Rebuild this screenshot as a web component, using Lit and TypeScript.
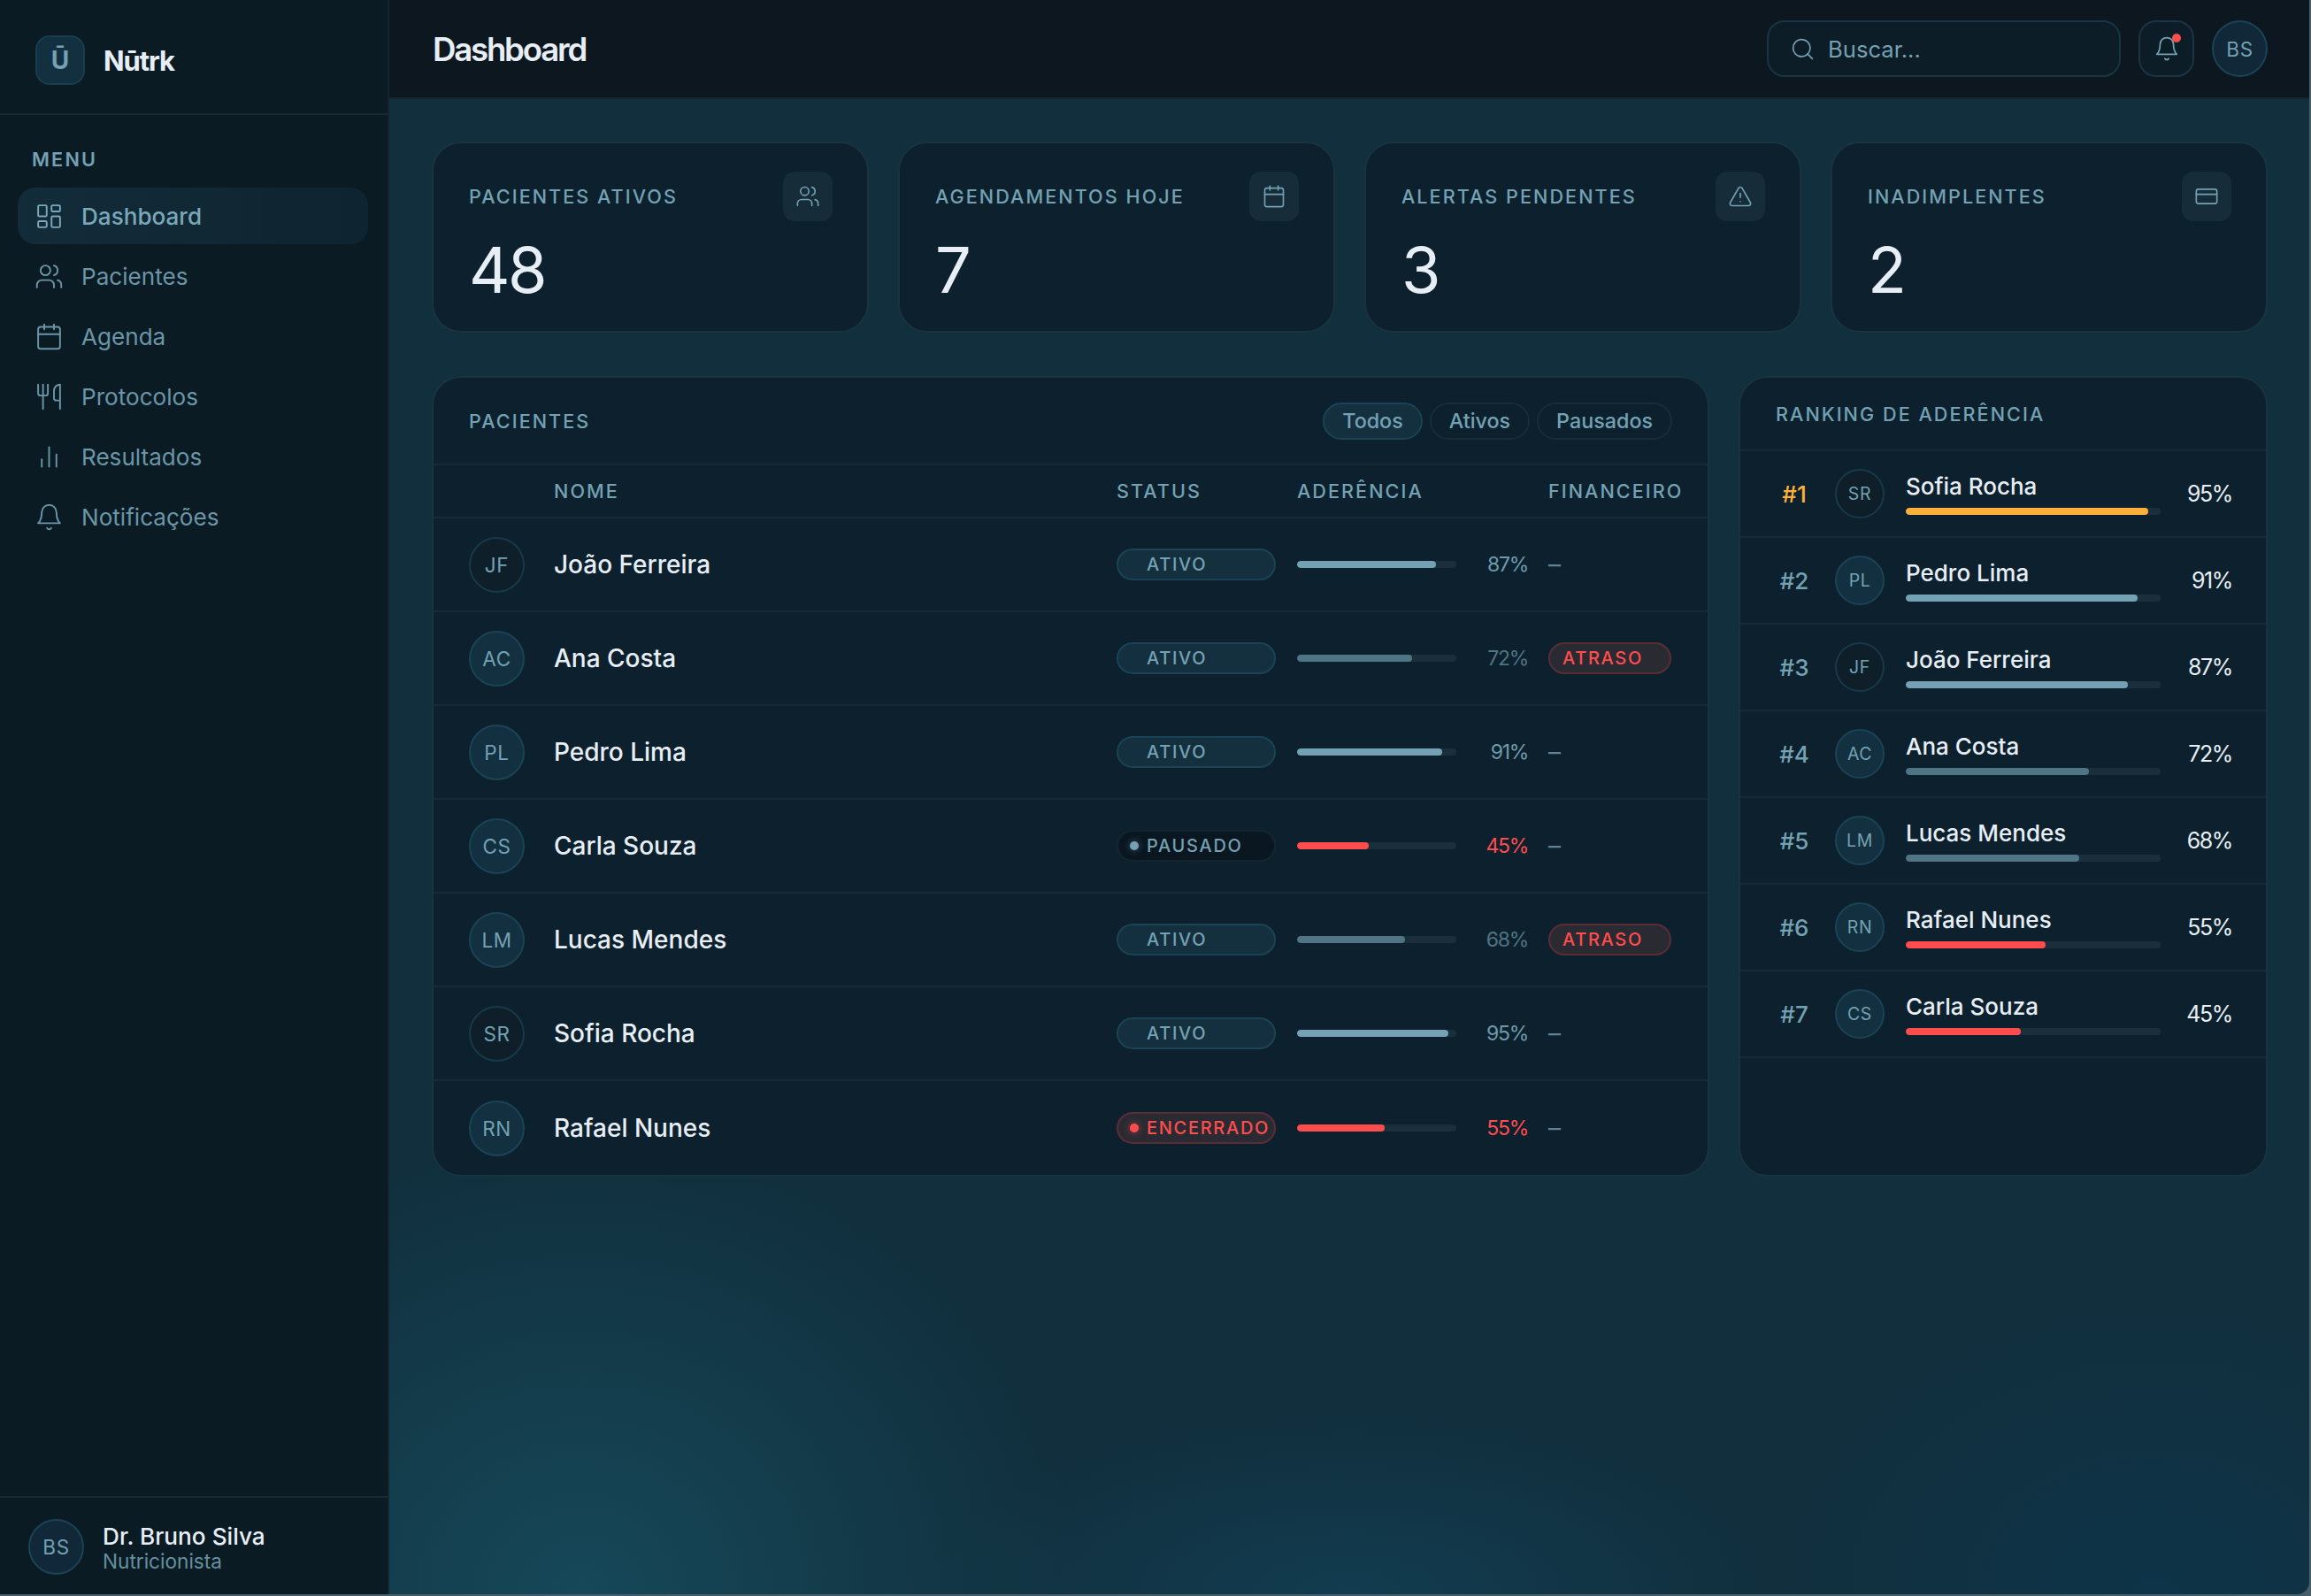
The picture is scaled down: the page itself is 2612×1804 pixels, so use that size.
import { LitElement, html, css, svg } from 'lit';
import { customElement } from 'lit/decorators.js';

const icons: Record<string, unknown> = {
  dashboard: svg`<rect x="3" y="3" width="7" height="9" rx="1"/><rect x="14" y="3" width="7" height="5" rx="1"/><rect x="14" y="12" width="7" height="9" rx="1"/><rect x="3" y="16" width="7" height="5" rx="1"/>`,
  users: svg`<path d="M16 21v-2a4 4 0 0 0-4-4H6a4 4 0 0 0-4 4v2"/><circle cx="9" cy="7" r="4"/><path d="M22 21v-2a4 4 0 0 0-3-3.87"/><path d="M16 3.13a4 4 0 0 1 0 7.75"/>`,
  calendar: svg`<rect x="3" y="4" width="18" height="18" rx="2"/><path d="M16 2v4"/><path d="M8 2v4"/><path d="M3 10h18"/>`,
  utensils: svg`<path d="M3 2v7c0 1.1.9 2 2 2h4a2 2 0 0 0 2-2V2"/><path d="M7 2v20"/><path d="M21 15V2a5 5 0 0 0-5 5v6c0 1.1.9 2 2 2h3Zm0 0v7"/>`,
  chart: svg`<path d="M18 20V10"/><path d="M12 20V4"/><path d="M6 20v-6"/>`,
  bell: svg`<path d="M6 8a6 6 0 0 1 12 0c0 7 3 9 3 9H3s3-2 3-9"/><path d="M10.3 21a1.94 1.94 0 0 0 3.4 0"/>`,
  search: svg`<circle cx="11" cy="11" r="8"/><path d="m21 21-4.3-4.3"/>`,
  alert: svg`<path d="m21.73 18-8-14a2 2 0 0 0-3.48 0l-8 14A2 2 0 0 0 4 21h16a2 2 0 0 0 1.73-3Z"/><path d="M12 9v4"/><path d="M12 17h.01"/>`,
  card: svg`<rect x="2" y="5" width="20" height="14" rx="2"/><path d="M2 10h20"/>`,
};

const icon = (name: string, size: number) => html`<svg
  width=${size}
  height=${size}
  viewBox="0 0 24 24"
  fill="none"
  stroke="currentColor"
  stroke-width="1.4"
  stroke-linecap="round"
  stroke-linejoin="round"
>${icons[name]}</svg>`;

const nav = [
  ['dashboard', 'Dashboard'],
  ['users', 'Pacientes'],
  ['calendar', 'Agenda'],
  ['utensils', 'Protocolos'],
  ['chart', 'Resultados'],
  ['bell', 'Notificações'],
];

const stats = [
  ['Pacientes ativos', '48', 'users'],
  ['Agendamentos hoje', '7', 'calendar'],
  ['Alertas pendentes', '3', 'alert'],
  ['Inadimplentes', '2', 'card'],
];

const patients = [
  { ini: 'JF', name: 'João Ferreira', status: 'ativo', pct: 87, late: false },
  { ini: 'AC', name: 'Ana Costa', status: 'ativo', pct: 72, late: true },
  { ini: 'PL', name: 'Pedro Lima', status: 'ativo', pct: 91, late: false },
  { ini: 'CS', name: 'Carla Souza', status: 'pausado', pct: 45, late: false },
  { ini: 'LM', name: 'Lucas Mendes', status: 'ativo', pct: 68, late: true },
  { ini: 'SR', name: 'Sofia Rocha', status: 'ativo', pct: 95, late: false },
  { ini: 'RN', name: 'Rafael Nunes', status: 'encerrado', pct: 55, late: false },
];

const ranking = [...patients].sort((a, b) => b.pct - a.pct);

const tone = (pct: number) => (pct < 60 ? 'low' : pct < 80 ? 'mid' : 'high');
const avatarTone = (ini: string) => (ini === 'JF' || ini === 'SR' ? 'dim' : '');

@customElement('app-root')
export class AppRoot extends LitElement {
  static styles = css`
    :host {
      display: block;
      height: 1804px;
      background: #465f6b;
      font-family: Inter, 'Noto Sans', sans-serif;
      color: #e8eef5;
      --muted: #74a1b3;
      --line: #152a36;
      --edge: #1a3340;
      --card: #0c212d;
    }

    * {
      box-sizing: border-box;
    }

    /* the capture has a thin light edge on the right and bottom, with a rounded corner */
    .shell {
      display: grid;
      grid-template-columns: 440px 1fr;
      width: 2610px;
      height: 1802px;
      border-bottom-right-radius: 14px;
      overflow: hidden;
    }

    /* sidebar */
    .sidebar {
      display: flex;
      flex-direction: column;
      background: #0a1b24;
      border-right: 2px solid #14252f;
    }

    .brand {
      display: flex;
      align-items: center;
      gap: 21px;
      height: 130px;
      padding: 8px 0 0 40px;
      border-bottom: 2px solid var(--line);
    }

    .logo {
      display: flex;
      align-items: center;
      justify-content: center;
      width: 56px;
      height: 56px;
      border-radius: 16px;
      background: #12303f;
      border: 2px solid #173d4f;
      color: #74a1b3;
      font-size: 28px;
      font-weight: 700;
    }

    .brand-name {
      font-size: 31px;
      font-weight: 700;
      letter-spacing: -1.1px;
    }

    .menu-label {
      margin: 35px 0 0 36px;
      font-size: 21.6px;
      font-weight: 600;
      letter-spacing: 2.2px;
      color: var(--muted);
      line-height: 30px;
    }

    .nav {
      display: flex;
      flex-direction: column;
      gap: 4px;
      margin: 17px 22px 0 20px;
    }

    .nav-item {
      display: flex;
      align-items: center;
      gap: 20px;
      height: 64px;
      padding-left: 19px;
      border-radius: 20px;
      font-size: 26.1px;
      color: #6a96a8;
    }

    .nav-item.active {
      background: linear-gradient(90deg, #132c39, #0e2430);
      color: #7aa8ba;
      font-weight: 500;
    }

    .user {
      display: flex;
      align-items: center;
      gap: 21px;
      margin-top: auto;
      height: 111px;
      padding: 2px 0 0 32px;
      border-top: 2px solid var(--line);
    }

    .user .avatar {
      background: #102838;
    }

    .user-text {
      padding-top: 4px;
    }

    .user-name {
      font-size: 26.2px;
      font-weight: 500;
      line-height: 28.5px;
    }

    .user-role {
      font-size: 22.6px;
      color: #64909f;
      line-height: 27px;
    }

    /* avatars */
    .avatar {
      flex: none;
      display: flex;
      align-items: center;
      justify-content: center;
      width: 63px;
      height: 63px;
      border-radius: 50%;
      background: #12303f;
      border: 2px solid #1a4355;
      color: #74a1b3;
      font-size: 22.5px;
      letter-spacing: 0.6px;
    }

    .avatar.dim {
      background: #0e1f2a;
      border-color: #17394a;
    }

    .avatar.small {
      width: 56px;
      height: 56px;
      font-size: 19.5px;
    }

    /* topbar */
    .content {
      display: flex;
      flex-direction: column;
      min-width: 0;
      background:
        radial-gradient(560px 520px at 10% 100%, #164859 0%, rgba(22, 72, 89, 0) 100%),
        radial-gradient(480px 200px at 50% 100%, #123c50 0%, rgba(18, 60, 80, 0) 100%),
        radial-gradient(420px 320px at 92% 100%, #0e3449 0%, rgba(14, 52, 73, 0) 100%),
        #112f3d;
    }

    .topbar {
      flex: none;
      display: flex;
      align-items: center;
      height: 112px;
      padding: 0 47px 0 49px;
      background: #0c1720;
      border-bottom: 2px solid #14252f;
    }

    .title {
      margin: 2px 0 0;
      font-size: 36.6px;
      font-weight: 600;
      letter-spacing: -2.2px;
    }

    .search {
      display: flex;
      align-items: center;
      gap: 14px;
      width: 400px;
      height: 64px;
      margin-left: auto;
      padding-left: 24px;
      border-radius: 20px;
      border: 2px solid #193544;
      background: #0c1d27;
      color: var(--muted);
      font-size: 25.6px;
    }

    .bell {
      position: relative;
      display: flex;
      align-items: center;
      justify-content: center;
      width: 63px;
      height: 64px;
      margin-left: 20px;
      border-radius: 20px;
      border: 2px solid #193544;
      background: #0c1d27;
      color: var(--muted);
    }

    .bell::after {
      content: '';
      position: absolute;
      top: 13px;
      right: 13px;
      width: 10px;
      height: 10px;
      border-radius: 50%;
      background: #ff4d4d;
    }

    .topbar .avatar {
      width: 63px;
      height: 64px;
      margin-left: 20px;
      background: #102838;
    }

    /* main */
    .main {
      display: flex;
      flex-direction: column;
      gap: 49px;
      padding: 48px 47px 0 48px;
    }

    .stats {
      display: grid;
      grid-template-columns: repeat(4, 1fr);
      gap: 33px;
    }

    .stat {
      height: 216px;
      padding: 32px 39px 32px 40px;
      border-radius: 33px;
      background: var(--card);
      border: 2px solid var(--edge);
    }

    .stat-top {
      display: flex;
      align-items: center;
      justify-content: space-between;
    }

    .label {
      font-size: 21.6px;
      font-weight: 500;
      letter-spacing: 2.05px;
      color: var(--muted);
      text-transform: uppercase;
    }

    .stat-icon {
      display: flex;
      align-items: center;
      justify-content: center;
      width: 56px;
      height: 56px;
      border-radius: 13px;
      background: #162c38;
      color: var(--muted);
    }

    .stat-value {
      margin-top: 19px;
      font-size: 72px;
      line-height: 1;
      font-weight: 400;
      letter-spacing: -2.5px;
    }

    .panels {
      display: grid;
      grid-template-columns: 1fr 598px;
      gap: 33px;
    }

    .panel {
      border-radius: 33px;
      background: var(--card);
      border: 2px solid var(--edge);
      overflow: hidden;
    }

    .panel-head {
      display: flex;
      align-items: center;
      justify-content: space-between;
      height: 99px;
      padding: 0 40px;
      border-bottom: 2px solid var(--line);
    }

    .filters {
      display: flex;
      gap: 8px;
    }

    .filter {
      height: 42px;
      padding: 0 20px;
      display: flex;
      align-items: center;
      border-radius: 21px;
      border: 2px solid #172d3a;
      color: var(--muted);
      font-size: 23.3px;
      font-weight: 500;
    }

    .filter.on {
      background: #14303f;
      border-color: #1a4355;
    }

    .row {
      display: grid;
      grid-template-columns: 96px 636px 204px 284px 1fr;
      align-items: center;
      padding-left: 40px;
      height: 106px;
      border-bottom: 2px solid var(--line);
    }

    .row:last-child {
      border-bottom: none;
    }

    .row.head {
      height: 60px;
    }

    .name {
      font-size: 28px;
      font-weight: 500;
    }

    .pill {
      display: flex;
      align-items: center;
      gap: 9px;
      height: 36px;
      padding-left: 13px;
      border-radius: 18px;
      border: 2px solid #1a4355;
      background: #14303e;
      color: #74a1b3;
      font-size: 20px;
      font-weight: 500;
      letter-spacing: 1.7px;
      text-transform: uppercase;
    }

    .pill i {
      flex: none;
      width: 10px;
      height: 10px;
      border-radius: 50%;
      background: #12303f;
    }

    .pill.status {
      width: 180px;
    }

    .pill.pausado {
      background: #0a1620;
      border-color: #14252f;
    }

    .pill.pausado i {
      background: #74a1b3;
      box-shadow: 0 0 8px rgba(116, 161, 179, 0.5);
    }

    .pill.encerrado,
    .pill.late {
      background: #2a2a33;
      border-color: #5a2d35;
      color: #ff4d4d;
    }

    .pill.encerrado i {
      background: #ff4d4d;
      box-shadow: 0 0 8px rgba(255, 77, 77, 0.6);
    }

    .pill.late {
      width: 139px;
      padding-left: 14px;
    }

    .adh {
      display: flex;
      align-items: center;
    }

    .track {
      height: 8px;
      border-radius: 4px;
      background: #1a2f3b;
      overflow: hidden;
    }

    .adh .track {
      width: 180px;
    }

    .fill {
      height: 100%;
      border-radius: 4px;
    }

    .fill.high {
      background: #74a1b3;
    }

    .fill.mid {
      background: #4f7483;
    }

    .fill.low {
      background: #ff4d4d;
    }

    .fill.gold {
      background: #ffb03a;
    }

    .pct {
      width: 81px;
      text-align: right;
      font-size: 23px;
      letter-spacing: -1.3px;
    }

    .pct.high {
      color: #6f9aab;
    }

    .pct.mid {
      color: #4f7483;
    }

    .pct.low {
      color: #ff4d4d;
    }

    .none {
      color: #5f8494;
      font-size: 28px;
    }

    /* ranking */
    .panel.rank .panel-head {
      height: 83px;
    }

    .rank-row {
      display: flex;
      align-items: center;
      height: 98px;
      padding: 0 38px 0 39px;
      border-bottom: 2px solid var(--line);
    }

    .rank-no {
      flex: none;
      width: 44px;
      text-align: center;
      font-size: 26px;
      font-weight: 500;
      color: #74a1b3;
    }

    .rank-no.gold {
      color: #ffb03a;
    }

    .rank-row .avatar {
      margin: 0 24px;
    }

    .rank-body {
      flex: 1;
      min-width: 0;
    }

    .rank-name {
      font-size: 26px;
      font-weight: 500;
      line-height: 30px;
      margin-bottom: 9px;
    }

    .rank-pct {
      flex: none;
      width: 81px;
      text-align: right;
      font-size: 25px;
      letter-spacing: -1.4px;
    }
  `;

  render() {
    return html`
      <div class="shell">
        <aside class="sidebar">
          <div class="brand">
            <div class="logo">Ū</div>
            <div class="brand-name">Nūtrk</div>
          </div>
          <div class="menu-label">MENU</div>
          <nav class="nav">
            ${nav.map(
              ([ic, label], i) => html`
                <div class="nav-item ${i === 0 ? 'active' : ''}">${icon(ic, 33)}${label}</div>
              `
            )}
          </nav>
          <div class="user">
            <div class="avatar">BS</div>
            <div class="user-text">
              <div class="user-name">Dr. Bruno Silva</div>
              <div class="user-role">Nutricionista</div>
            </div>
          </div>
        </aside>

        <div class="content">
          <header class="topbar">
            <h1 class="title">Dashboard</h1>
            <div class="search">${icon('search', 29)}Buscar...</div>
            <div class="bell">${icon('bell', 30)}</div>
            <div class="avatar">BS</div>
          </header>

          <main class="main">
            <section class="stats">
              ${stats.map(
                ([label, value, ic]) => html`
                  <div class="stat">
                    <div class="stat-top">
                      <span class="label">${label}</span>
                      <span class="stat-icon">${icon(ic, 28)}</span>
                    </div>
                    <div class="stat-value">${value}</div>
                  </div>
                `
              )}
            </section>

            <section class="panels">
              <div class="panel">
                <div class="panel-head">
                  <span class="label">Pacientes</span>
                  <div class="filters">
                    <span class="filter on">Todos</span>
                    <span class="filter">Ativos</span>
                    <span class="filter">Pausados</span>
                  </div>
                </div>
                <div class="row head">
                  <span></span>
                  <span class="label">Nome</span>
                  <span class="label">Status</span>
                  <span class="label">Aderência</span>
                  <span class="label">Financeiro</span>
                </div>
                ${patients.map(
                  (p) => html`
                    <div class="row">
                      <div class="avatar ${avatarTone(p.ini)}">${p.ini}</div>
                      <div class="name">${p.name}</div>
                      <div class="pill status ${p.status}"><i></i>${p.status}</div>
                      <div class="adh">
                        <div class="track">
                          <div class="fill ${tone(p.pct)}" style="width: ${p.pct}%"></div>
                        </div>
                        <div class="pct ${tone(p.pct)}">${p.pct}%</div>
                      </div>
                      ${p.late
                        ? html`<div class="pill late">Atraso</div>`
                        : html`<div class="none">–</div>`}
                    </div>
                  `
                )}
              </div>

              <div class="panel rank">
                <div class="panel-head"><span class="label">Ranking de aderência</span></div>
                ${ranking.map(
                  (p, i) => html`
                    <div class="rank-row">
                      <div class="rank-no ${i === 0 ? 'gold' : ''}">#${i + 1}</div>
                      <div class="avatar small ${avatarTone(p.ini)}">${p.ini}</div>
                      <div class="rank-body">
                        <div class="rank-name">${p.name}</div>
                        <div class="track">
                          <div class="fill ${i === 0 ? 'gold' : tone(p.pct)}" style="width: ${p.pct}%"></div>
                        </div>
                      </div>
                      <div class="rank-pct">${p.pct}%</div>
                    </div>
                  `
                )}
              </div>
            </section>
          </main>
        </div>
      </div>
    `;
  }
}
